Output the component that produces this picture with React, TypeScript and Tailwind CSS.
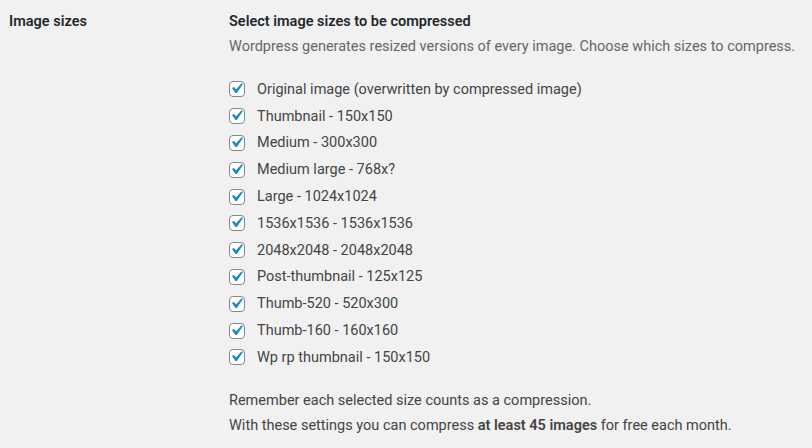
import React from "react";

const sizes = [
  "Original image (overwritten by compressed image)",
  "Thumbnail - 150x150",
  "Medium - 300x300",
  "Medium large - 768x?",
  "Large - 1024x1024",
  "1536x1536 - 1536x1536",
  "2048x2048 - 2048x2048",
  "Post-thumbnail - 125x125",
  "Thumb-520 - 520x300",
  "Thumb-160 - 160x160",
  "Wp rp thumbnail - 150x150",
];

function Check() {
  return (
    <span className="relative inline-block w-[16px] h-[16px] shrink-0 rounded-[4px] border border-[#7e8993] bg-white">
      <svg
        viewBox="0 0 20 20"
        className="absolute left-[-4px] top-[-4px] w-[21px] h-[21px]"
      >
        <path
          d="M14.83 4.89l1.34.94-5.81 8.38H9.02L5.78 9.67l1.34-1.25 2.57 2.4z"
          fill="#1e8cbe"
        />
      </svg>
    </span>
  );
}

export default function App() {
  return (
    <div
      className="w-[812px] h-[448px] bg-[#f1f1f1] text-[14.5px] text-[#444] whitespace-nowrap"
      style={{ fontFamily: "Roboto, 'Liberation Sans', sans-serif" }}
    >
      <div className="flex">
        <div className="w-[229px] pl-[9px] pt-[12px] font-semibold text-[#23282d] leading-[19px]">
          Image sizes
        </div>
        <div className="flex-1 pt-[12px]">
          <div className="font-semibold text-[#23282d] leading-[19px]">
            Select image sizes to be compressed
          </div>
          <div className="mt-[6px] text-[#666] leading-[19px]">
            Wordpress generates resized versions of every image. Choose which sizes to compress.
          </div>
          <div className="mt-[20px] flex flex-col">
            {sizes.map((s) => (
              <div key={s} className="flex items-center h-[26.8px]">
                <Check />
                <span className="ml-[12px] leading-[19px]">{s}</span>
              </div>
            ))}
          </div>
          <div className="mt-[20px] leading-[19px]">
            Remember each selected size counts as a compression.
          </div>
          <div className="mt-[6px] leading-[19px]">
            With these settings you can compress <strong className="font-semibold">at least 45 images</strong> for free each month.
          </div>
        </div>
      </div>
    </div>
  );
}
